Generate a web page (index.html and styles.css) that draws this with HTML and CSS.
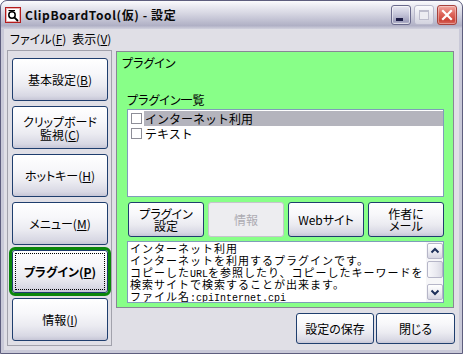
FILE: index.html
```html
<!DOCTYPE html>
<html lang="ja">
<head>
<meta charset="utf-8">
<title>ClipBoardTool(仮) - 設定</title>
<link rel="stylesheet" href="styles.css">
</head>
<body>
<div class="window">
  <header class="titlebar">
    <svg class="app-icon" width="16" height="16" viewBox="0 0 16 16">
      <rect x="0.5" y="0.5" width="15" height="15" fill="#ffffff" stroke="#b41c1c"/>
      <rect x="1.5" y="1.5" width="13" height="13" fill="none" stroke="#e9b2b2"/>
      <path d="M3.5 3.5 H10" stroke="#000" stroke-width="1.2" fill="none"/>
      <circle cx="7" cy="8" r="3.2" fill="none" stroke="#000" stroke-width="1.5"/>
      <path d="M9.3 10.3 L13 14" stroke="#000" stroke-width="1.8" fill="none"/>
    </svg>
    <span class="title">ClipBoardTool(仮) - 設定</span>
    <div class="caption-buttons">
      <span class="cap cap-min"><span class="min-bar"></span></span>
      <span class="cap cap-max"><span class="max-box"></span></span>
      <span class="cap cap-close">
        <svg width="18" height="18" viewBox="0 0 18 18"><path d="M5 5 L13 13 M13 5 L5 13" stroke="#ffffff" stroke-width="2.2" stroke-linecap="square" fill="none"/></svg>
      </span>
    </div>
  </header>
  <div class="frame">
    <div class="client">
      <nav class="menubar">
        <span class="menu-item">ファイル(<u>F</u>)</span>
        <span class="menu-item">表示(<u>V</u>)</span>
      </nav>
      <div class="content">
        <div class="nav-panel">
          <button class="btn nav-btn"><span class="label">基本設定(<u>B</u>)</span></button>
          <button class="btn nav-btn"><span class="label">クリップボード<br>監視(<u>C</u>)</span></button>
          <button class="btn nav-btn"><span class="label">ホットキー(<u>H</u>)</span></button>
          <button class="btn nav-btn"><span class="label">メニュー(<u>M</u>)</span></button>
          <button class="btn nav-btn is-active"><span class="label">プラグイン(<u>P</u>)</span></button>
          <button class="btn nav-btn"><span class="label">情報(<u>I</u>)</span></button>
        </div>
        <div class="main">
          <section class="plugin-panel">
            <div class="panel-title">プラグイン</div>
            <div class="panel-body">
              <div class="list-label">プラグイン一覧</div>
              <div class="listbox">
                <div class="list-row is-selected"><span class="check"></span><span class="row-label">インターネット利用</span></div>
                <div class="list-row"><span class="check"></span><span class="row-label">テキスト</span></div>
              </div>
              <div class="action-row">
                <button class="btn action-btn"><span class="label">プラグイン<br>設定</span></button>
                <button class="btn action-btn is-disabled"><span class="label">情報</span></button>
                <button class="btn action-btn"><span class="label">Webサイト</span></button>
                <button class="btn action-btn"><span class="label">作者に<br>メール</span></button>
              </div>
              <div class="memo">
                <div class="memo-text">
                  <div class="memo-line">インターネット利用</div>
                  <div class="memo-line">インターネットを利用するプラグインです。</div>
                  <div class="memo-line">コピーした<span class="half">URL</span>を参照したり、コピーしたキーワードを</div>
                  <div class="memo-line">検索サイトで検索することが出来ます。</div>
                  <div class="memo-line">ファイル名<span class="half">:cpiInternet.cpi</span></div>
                </div>
                <div class="scrollbar">
                  <span class="sb-btn">
                    <svg width="14" height="14" viewBox="0 0 14 14"><path d="M3.5 8.5 L7 5 L10.5 8.5" stroke="#1c2f5a" stroke-width="2" fill="none"/></svg>
                  </span>
                  <span class="sb-thumb"></span>
                  <span class="sb-track"></span>
                  <span class="sb-btn">
                    <svg width="14" height="14" viewBox="0 0 14 14"><path d="M3.5 5.5 L7 9 L10.5 5.5" stroke="#1c2f5a" stroke-width="2" fill="none"/></svg>
                  </span>
                </div>
              </div>
            </div>
          </section>
          <div class="footer">
            <button class="btn footer-btn save-btn"><span class="label">設定の保存</span></button>
            <button class="btn footer-btn"><span class="label">閉じる</span></button>
          </div>
        </div>
      </div>
    </div>
  </div>
</div>
</body>
</html>
```

FILE: styles.css
```css
* {
  box-sizing: border-box;
}

html,
body {
  margin: 0;
  padding: 0;
}

body {
  background: #ffffff;
  font-family: "Noto Sans CJK JP", "Noto Sans", sans-serif;
  font-size: 12px;
  color: #000000;
}

.window {
  width: 463px;
  height: 354px;
  display: flex;
  flex-direction: column;
  border: 1px solid #5e5e7e;
  border-radius: 7px 7px 0 0;
  background: #c9c9d8;
  overflow: hidden;
}

/* ---------- title bar ---------- */
.titlebar {
  height: 28px;
  flex: none;
  display: flex;
  align-items: center;
  padding: 0 5px 0 4px;
  background: linear-gradient(to bottom,
      #fbfbfd 0%,
      #ebebf2 18%,
      #d6d6e2 45%,
      #bebed0 72%,
      #b0b0c5 88%,
      #d2d2de 100%);
  border-radius: 6px 6px 0 0;
}

.app-icon {
  flex: none;
  display: block;
  margin-right: 4px;
}

.title {
  font-family: "Noto Sans CJK JP", sans-serif;
  font-weight: bold;
  font-size: 12px;
  letter-spacing: 0.6px;
  color: #0a0a0a;
  line-height: 16px;
}

.caption-buttons {
  margin-left: auto;
  display: flex;
  gap: 3px;
}

.cap {
  width: 20px;
  height: 20px;
  border-radius: 3px;
  position: relative;
  display: flex;
  align-items: center;
  justify-content: center;
}

.cap-min {
  border: 1px solid #6a6a8c;
  background: linear-gradient(to bottom, #e8e8f2 0%, #c6c6da 45%, #9f9fbc 85%, #bcbcd0 100%);
  box-shadow: inset 0 0 0 1px rgba(255, 255, 255, 0.55);
}

.min-bar {
  position: absolute;
  left: 4px;
  top: 12px;
  width: 7px;
  height: 3px;
  background: #1c1c46;
}

.cap-max {
  border: 1px solid #b9b9cb;
  background: linear-gradient(to bottom, #fbfbfd 0%, #e6e6ee 50%, #d3d3df 100%);
}

.max-box {
  width: 10px;
  height: 10px;
  border: 1px solid #bdbdcd;
  border-top-width: 2px;
  background: #ececf2;
}

.cap-close {
  border: 1px solid #a7423c;
  background: linear-gradient(to bottom, #f1aaa2 0%, #e06b60 40%, #cc4539 80%, #d8675c 100%);
  box-shadow: inset 0 0 0 1px rgba(255, 255, 255, 0.35);
}

.cap-close svg {
  display: block;
}

/* ---------- frame / client ---------- */
.frame {
  flex: 1;
  display: flex;
  padding: 0 3px 3px;
}

.client {
  flex: 1;
  display: flex;
  flex-direction: column;
  background: #e0dfe6;
}

.menubar {
  height: 19px;
  flex: none;
  display: flex;
  align-items: center;
  padding-left: 3px;
  font-feature-settings: "palt";
}

.menu-item {
  padding: 0 3px;
  line-height: 14px;
}

u {
  text-underline-offset: 1px;
}

.content {
  flex: 1;
  display: flex;
  gap: 4px;
  padding: 2px 4px 4px 3px;
}

/* ---------- buttons ---------- */
.btn {
  font: inherit;
  color: #000000;
  margin: 0;
  padding: 0;
  display: flex;
  align-items: center;
  justify-content: center;
  text-align: center;
  border: 1px solid #1f3e6e;
  border-radius: 3px;
  background: linear-gradient(to bottom,
      #ffffff 0%,
      #f7f7fa 35%,
      #ebebf1 65%,
      #d8d8e4 90%,
      #c6c6d6 100%);
  font-feature-settings: "palt";
  position: relative;
}

.label {
  display: block;
  line-height: 13px;
}

.nav-panel {
  width: 105px;
  flex: none;
  display: flex;
  flex-direction: column;
  gap: 5px;
  border: 1px solid #a2a2ac;
  padding: 7px 3px 4px 4px;
}

.nav-btn {
  height: 43px;
  flex: none;
}

.nav-btn.is-active {
  font-weight: bold;
  outline: 3px solid #0b860b;
  outline-offset: 0;
}

.nav-btn.is-active::after {
  content: "";
  position: absolute;
  inset: 2px;
  border: 1px dotted #000000;
}

/* ---------- right side ---------- */
.main {
  flex: 1;
  display: flex;
  flex-direction: column;
  padding-top: 1px;
}

.plugin-panel {
  height: 257px;
  flex: none;
  margin-right: 1px;
  border: 1px solid #878795;
  background: #88ff88;
  padding: 4px 9px 4px 5px;
  display: flex;
  flex-direction: column;
}

.panel-title {
  line-height: 14px;
  height: 14px;
  font-feature-settings: "palt";
}

.panel-body {
  margin-top: 23px;
  padding-left: 5px;
  display: flex;
  flex-direction: column;
}

.list-label {
  line-height: 14px;
  height: 14px;
  font-feature-settings: "palt";
}

.listbox {
  margin-top: 2px;
  height: 88px;
  border: 1px solid #7f9db9;
  background: #ffffff;
  padding-top: 1px;
}

.list-row {
  height: 15px;
  display: flex;
  align-items: center;
}

.check {
  width: 11px;
  height: 11px;
  margin: 0 2px 0 3px;
  border: 1px solid #8e8e98;
  background: #ffffff;
  flex: none;
}

.row-label {
  flex: 1;
  height: 15px;
  line-height: 15px;
  padding-left: 1px;
}

.list-row.is-selected .row-label {
  background: #b4b4bd;
}

.action-row {
  margin-top: 5px;
  margin-left: 1px;
  height: 35px;
  display: flex;
  gap: 4px;
}

.action-btn {
  width: 76px;
  height: 35px;
}

.action-btn .label {
  line-height: 12px;
}

.action-btn.is-disabled {
  border-color: #c5c5cc;
  background: #ededf0;
  color: #acabb2;
}

.memo {
  margin-top: 4px;
  height: 62px;
  border: 1px solid #7f9db9;
  background: #ffffff;
  display: flex;
}

.memo-text {
  flex: 1;
  padding: 0 2px;
  overflow: hidden;
}

.memo-line {
  height: 12px;
  font-size: 11px;
  letter-spacing: 1px;
  line-height: 12px;
  white-space: nowrap;
}

.half {
  font-family: "Liberation Mono", monospace;
  font-size: 10px;
  letter-spacing: 0;
  line-height: 0;
}

.scrollbar {
  width: 17px;
  flex: none;
  display: flex;
  flex-direction: column;
  padding: 1px 0 2px 1px;
  background: #f6f6f8;
}

.sb-btn {
  width: 16px;
  height: 16px;
  flex: none;
  display: flex;
  align-items: center;
  justify-content: center;
  border: 1px solid #b6b6c8;
  border-radius: 2px;
  background: linear-gradient(to bottom, #ffffff 0%, #ececf2 55%, #d5d5e2 100%);
}

.sb-btn svg {
  display: block;
}

.sb-thumb {
  width: 16px;
  height: 17px;
  flex: none;
  margin-top: 2px;
  border: 1px solid #b6b6c8;
  border-radius: 2px;
  background: linear-gradient(to right, #f8f8fb 0%, #e9e9f0 60%, #d9d9e4 100%);
}

.sb-track {
  flex: 1;
}

.footer {
  margin-top: 5px;
  display: flex;
  justify-content: flex-end;
  gap: 2px;
}

.footer-btn {
  width: 79px;
  height: 31px;
}

.save-btn {
  width: 78px;
}
```
